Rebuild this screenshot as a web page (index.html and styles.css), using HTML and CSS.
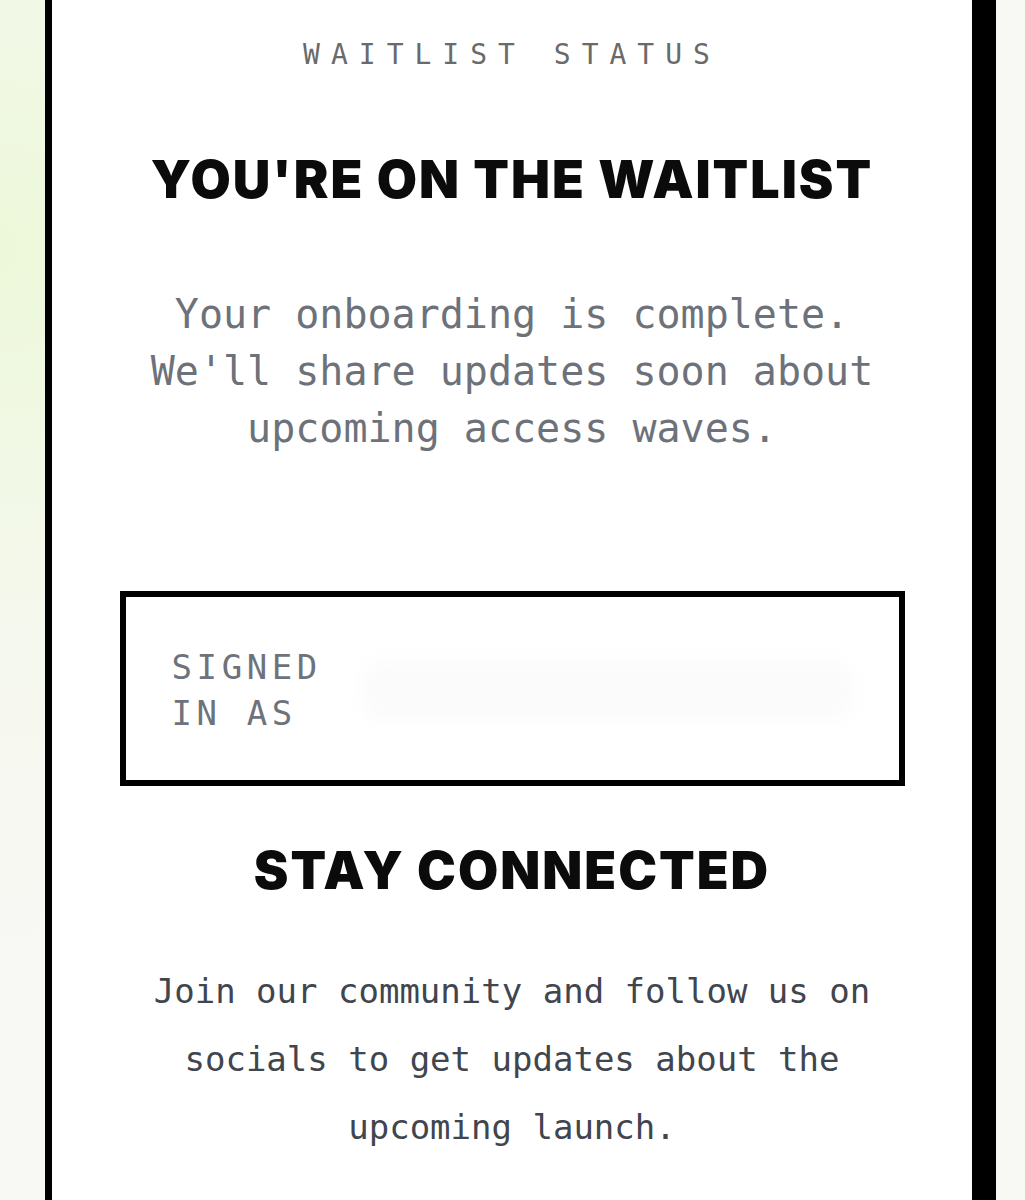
FILE: index.html
```html
<!DOCTYPE html>
<html lang="en">
<head>
<meta charset="utf-8">
<title>Waitlist status</title>
<link rel="stylesheet" href="styles.css">
</head>
<body>
<main class="card">
  <p class="eyebrow">WAITLIST STATUS</p>
  <h1 class="title">YOU'RE ON THE WAITLIST</h1>
  <p class="lead">Your onboarding is complete. We'll share updates soon about upcoming access waves.</p>
  <section class="account">
    <span class="account-label">SIGNED IN AS</span>
    <span class="account-email" aria-hidden="true"></span>
  </section>
  <h2 class="title title-connect">STAY CONNECTED</h2>
  <p class="social-text">Join our community and follow us on socials to get updates about the upcoming launch.</p>
</main>
</body>
</html>
```

FILE: styles.css
```css
html, body {
  margin: 0;
  padding: 0;
}

body {
  min-height: 1200px;
  background:
    radial-gradient(ellipse 700px 900px at 0% 20%, #edf8da 0%, rgba(244, 248, 236, 0.6) 45%, rgba(248, 248, 244, 0) 80%),
    #f8f8f4;
  overflow: hidden;
}

.card {
  box-sizing: border-box;
  width: 934px;
  min-height: 1240px;
  margin-left: 45px;
  padding: 35px 0 60px;
  background: #ffffff;
  border-left: 7px solid #000;
  border-right: 7px solid #000;
  box-shadow: 17px 0 0 #000;
  text-align: center;
  font-family: "DejaVu Sans Mono", "Liberation Mono", monospace;
}

.eyebrow {
  margin: 0;
  font-size: 28px;
  line-height: 40px;
  letter-spacing: 11px;
  color: #6a6a6a;
}

.title {
  margin: 72px 0 0;
  font-family: Inter, "Liberation Sans", sans-serif;
  font-weight: 900;
  font-size: 52px;
  line-height: 66px;
  color: #0b0b0b;
  letter-spacing: 2px;
}

.lead {
  max-width: 750px;
  margin: 73px auto 0;
  font-size: 40px;
  line-height: 57px;
  color: #6d727a;
}

.account {
  display: flex;
  align-items: flex-start;
  box-sizing: border-box;
  width: 785px;
  height: 195px;
  margin: 134px auto 0;
  padding: 47px 46px 44px;
  border: 6px solid #000;
  text-align: left;
}

.account-label {
  flex: 0 0 170px;
  font-size: 34px;
  line-height: 46px;
  letter-spacing: 4.6px;
  color: #6e737b;
}

.account-email {
  flex: 1;
  height: 60px;
  margin: 16px 0 0 20px;
  border-radius: 20px;
  background: #fbfbfb;
  filter: blur(8px);
}

.title-connect {
  margin-top: 52px;
}

.social-text {
  max-width: 760px;
  margin: 53px auto 0;
  font-size: 34px;
  line-height: 68px;
  color: #40454e;
}
```
